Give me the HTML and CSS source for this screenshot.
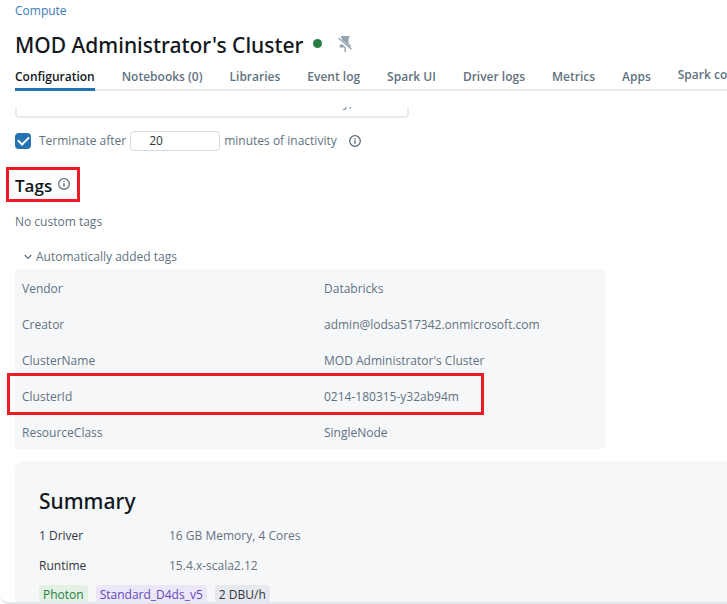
FILE: index.html
```html
<!DOCTYPE html>
<html lang="en">
<head>
<meta charset="utf-8">
<title>MOD Administrator's Cluster</title>
<link rel="stylesheet" href="styles.css">
</head>
<body>
<div class="frame">
  <header class="header">
    <a class="breadcrumb" href="#">Compute</a>
    <div class="title-row">
      <h1 class="title">MOD Administrator's Cluster</h1>
      <span class="status"></span>
      <button class="pin" type="button" aria-label="Pin cluster">
        <svg width="14" height="18" viewBox="0 0 14 18" fill="#98a4ae"><path d="M3 1h8.500v2h-1v5l2.500 3v1.500H8V17H6.500v-4.500H1.500V11L4 8V3H3z"/><path d="M0 3.300 14 15.800" stroke="#fff" stroke-width="3.200"/><path d="M.6 3 13.400 14.300" stroke="#98a4ae" stroke-width="1.500"/></svg>
      </button>
    </div>
    <nav class="tabs">
      <a class="tab active" href="#">Configuration</a>
      <a class="tab" href="#">Notebooks (0)</a>
      <a class="tab" href="#">Libraries</a>
      <a class="tab" href="#">Event log</a>
      <a class="tab" href="#">Spark UI</a>
      <a class="tab" href="#">Driver logs</a>
      <a class="tab" href="#">Metrics</a>
      <a class="tab" href="#">Apps</a>
      <a class="tab raised" href="#">Spark compute UI</a>
    </nav>
  </header>
  <main class="content">
    <div class="clip"><div class="field">y,</div></div>
    <div class="terminate">
      <input class="check" type="checkbox" id="terminate" checked>
      <label for="terminate">Terminate after</label>
      <input class="minutes" type="text" id="minutes" value="20">
      <label for="minutes">minutes of inactivity</label>
      <svg class="info" width="12" height="12" viewBox="0 0 12 12" fill="none" stroke="#566b7b"><circle cx="6" cy="6" r="5.300" stroke-width="1.300"/><path d="M6 5.300v3.400M6 3v1.300" stroke-width="1.400"/></svg>
    </div>
    <div class="tags-title marked">
      <h2 class="tags-heading">Tags</h2>
      <svg width="12" height="12" viewBox="0 0 12 12" fill="none" stroke="#566b7b"><circle cx="6" cy="6" r="5.300" stroke-width="1.200"/><path d="M6 5.300v3.400M6 3v1.300" stroke-width="1.300"/></svg>
    </div>
    <p class="none">No custom tags</p>
    <button class="toggle" type="button">
      <svg width="8" height="6" viewBox="0 0 8 6" fill="none" stroke="#5f7281" stroke-width="1.200"><path d="M.8 1 4 4.400 7.200 1"/></svg>
      Automatically added tags
    </button>
    <div class="tag-panel">
      <table class="tag-table">
        <tr><th>Vendor</th><td>Databricks</td></tr>
        <tr><th>Creator</th><td>admin@lodsa517342.onmicrosoft.com</td></tr>
        <tr><th>ClusterName</th><td>MOD Administrator's Cluster</td></tr>
        <tr class="marked-row"><th>ClusterId</th><td>0214-180315-y32ab94m</td></tr>
        <tr><th>ResourceClass</th><td>SingleNode</td></tr>
      </table>
    </div>
    <section class="summary">
      <h2 class="summary-heading">Summary</h2>
      <dl class="facts">
        <dt>1 Driver</dt><dd>16 GB Memory, 4 Cores</dd>
        <dt>Runtime</dt><dd>15.4.x-scala2.12</dd>
      </dl>
      <div class="chips">
        <span class="chip green">Photon</span>
        <span class="chip purple">Standard_D4ds_v5</span>
        <span class="chip gray">2 DBU/h</span>
      </div>
    </section>
  </main>
</div>
</body>
</html>
```
FILE: styles.css
```css
* { box-sizing: border-box; }
body {
  margin: 0;
  background: #fff;
  color: #5f7281;
  font: 12px/20px "Open Sans", "Noto Sans", sans-serif;
}
h1, h2, p, dl, dd { margin: 0; }
button { padding: 0; border: 0; background: none; color: inherit; font: inherit; }
svg { display: block; flex: none; }
.frame {
  height: 100vh;
  padding-top: 1px;
  overflow: hidden;
  border-bottom: 2px solid #e4e7ee;
  border-bottom-left-radius: 8px;
}
.breadcrumb { display: block; margin-left: 15px; color: #3a7ab5; text-decoration: none; }
.title-row { display: flex; align-items: center; height: 32px; margin: 8px 0 0 15px; }
.title { color: #11171c; font-family: "Noto Sans", sans-serif; font-size: 21px; line-height: 32px; font-weight: 500; white-space: nowrap; }
.status { width: 9px; height: 9px; margin: -3px 0 0 10px; border-radius: 50%; background: #277c43; }
.pin { margin: -3px 0 0 16px; }
.tabs {
  display: flex;
  gap: 27px;
  height: 30px;
  margin-left: 15px;
  overflow: hidden;
  box-shadow: inset 0 -2px #e8ecf0;
}
.tab { flex: none; padding-top: 6px; color: #5f7281; font-weight: 600; text-decoration: none; white-space: nowrap; }
.tab.active { color: #11171c; border-bottom: 3px solid #2272b4; }
.tab.raised { padding-top: 4px; }
.content { padding: 16px 0 0 15px; }
.clip { display: flex; align-items: flex-end; height: 11px; overflow: hidden; }
.field {
  flex: none;
  width: 394px;
  height: 32px;
  padding: 5px 0 0 326px;
  border: 2px solid #e8ecf0;
  border-radius: 4px;
}
.terminate { display: flex; align-items: center; margin-top: 13px; }
.check {
  appearance: none;
  width: 16px;
  height: 16px;
  margin: 0 8px 0 0;
  border-radius: 4px;
  background: #2272b4;
  display: grid;
  place-items: center;
}
.check::before {
  content: "";
  width: 9px;
  height: 5px;
  margin-top: -3px;
  border: solid #fff;
  border-width: 0 0 2px 2px;
  transform: rotate(-45deg);
}
.minutes {
  width: 90px;
  height: 20px;
  margin: 0 4px;
  padding: 0 18px;
  border: 1px solid #d3dbe2;
  border-radius: 4px;
  color: #30373d;
  font: inherit;
}
.info { margin-left: 12px; }
.marked { outline: 3px solid #ed1c24; }
.tags-title { display: flex; gap: 6px; width: max-content; height: 29px; margin: 19px 0 0 -6px; padding: 4px 7px 0 6px; }
.tags-title svg { margin-top: 4px; }
.tags-heading { color: #11171c; font-size: 17px; line-height: 24px; font-weight: 600; }
.none { margin-top: 13px; }
.toggle { display: flex; align-items: center; gap: 4px; margin: 15px 0 0 9px; }
.tag-panel { width: 591px; margin-top: 2px; border-radius: 4px; background: #f6f7f9; }
.tag-table { width: 100%; border-collapse: collapse; }
.tag-table th, .tag-table td { height: 36px; padding: 4px 0 0 7px; font-weight: 400; text-align: left; }
.tag-table th { width: 302px; }
.marked-row { position: relative; }
.marked-row::after { content: ""; position: absolute; inset: -4px 122px -2px -8px; border: 3px solid #ed1c24; }
.summary { margin-top: 12px; padding: 24px 24px 0; border-radius: 8px 0 0 0; background: #f6f7f9; }
.summary-heading { color: #11171c; font-family: "Noto Sans", sans-serif; font-size: 21px; line-height: 32px; font-weight: 500; }
.facts { display: grid; grid-template-columns: 130px 1fr; row-gap: 10px; margin-top: 9px; }
.facts dt { color: #30373d; }
.facts dd { color: #67737d; }
.chips { display: flex; gap: 8px; margin-top: 9px; }
.chip { padding: 0 4px; border-radius: 4px; white-space: nowrap; }
.green { background: #e2f1e4; color: #277c43; }
.purple { background: #ebe7f8; color: #6349b8; }
.gray { background: #e7e9ee; color: #30373d; }
```
